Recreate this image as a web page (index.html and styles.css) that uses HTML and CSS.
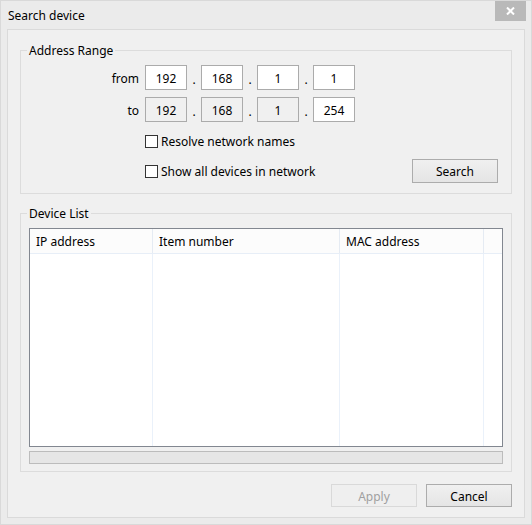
FILE: index.html
```html
<!DOCTYPE html>
<html>
<head>
<meta charset="utf-8">
<link rel="stylesheet" href="styles.css">
</head>
<body>
<div class="window">
  <div class="titlebar">
    <span class="title">Search device</span>
    <div class="close">
      <svg width="9" height="8" viewBox="0 0 9 8"><path d="M1 0.5 L8 7.5 M8 0.5 L1 7.5" stroke="#fff" stroke-width="2"/></svg>
    </div>
  </div>
  <div class="client">
    <div class="group group-range">
      <span class="legend">Address Range</span>
      <div class="ip-row">
        <span class="ip-label">from</span>
        <span class="octet">192</span><span class="dot">.</span>
        <span class="octet">168</span><span class="dot">.</span>
        <span class="octet">1</span><span class="dot">.</span>
        <span class="octet">1</span>
      </div>
      <div class="ip-row ip-row-to">
        <span class="ip-label">to</span>
        <span class="octet ro">192</span><span class="dot">.</span>
        <span class="octet ro">168</span><span class="dot">.</span>
        <span class="octet ro">1</span><span class="dot">.</span>
        <span class="octet">254</span>
      </div>
      <div class="check-row check-first">
        <span class="checkbox"></span><span class="check-label">Resolve network names</span>
      </div>
      <div class="check-row check-second">
        <span class="checkbox"></span><span class="check-label">Show all devices in network</span>
        <button class="btn btn-search">Search</button>
      </div>
    </div>
    <div class="group group-list">
      <span class="legend">Device List</span>
      <div class="listview">
        <div class="lv-header">
          <div class="col c1">IP address</div>
          <div class="col c2">Item number</div>
          <div class="col c3">MAC address</div>
          <div class="col c4"></div>
        </div>
        <div class="lv-body">
          <div class="col c1"></div>
          <div class="col c2"></div>
          <div class="col c3"></div>
          <div class="col c4"></div>
        </div>
      </div>
      <div class="progress"></div>
    </div>
    <div class="buttons">
      <button class="btn btn-disabled">Apply</button>
      <button class="btn">Cancel</button>
    </div>
  </div>
</div>
</body>
</html>
```

FILE: styles.css
```css
* { box-sizing: border-box; }
html, body { margin: 0; padding: 0; background: #ebebeb; }
body {
  font-family: "Noto Sans", "Open Sans", sans-serif;
  font-size: 12px;
  color: #000;
}
.window {
  width: 532px;
  height: 525px;
  border: 1px solid #d9d9d9;
  background: #ebebeb;
  padding: 0 6px 6px 6px;
  display: flex;
  flex-direction: column;
}
.titlebar {
  height: 28px;
  display: flex;
  align-items: flex-start;
  justify-content: space-between;
}
.title {
  margin-top: 7px;
  margin-left: 1px;
  line-height: 16px;
}
.close {
  width: 31px;
  height: 20px;
  margin-right: -1px;
  background: #b9b9b9;
  display: flex;
  align-items: center;
  justify-content: center;
}
.client {
  flex: 1;
  border: 1px solid #dadada;
  background: #f0f0f0;
  display: flex;
  flex-direction: column;
  padding: 20px 12px 0 12px;
}
.group {
  position: relative;
  border: 1px solid #dcdcdc;
}
.legend {
  position: absolute;
  top: -8px;
  left: 6px;
  padding: 0 2px;
  line-height: 16px;
  background: #f0f0f0;
}
.group-range {
  height: 144px;
  padding: 14px 13px 10px 0;
  display: flex;
  flex-direction: column;
}
.ip-row {
  height: 25px;
  display: flex;
  align-items: center;
}
.ip-row-to { margin-top: 7px; }
.ip-label {
  width: 118px;
  margin-right: 6px;
  text-align: right;
  padding-top: 1px;
}
.octet {
  width: 42px;
  height: 25px;
  padding-top: 1px;
  border: 1px solid #ababab;
  background: #fff;
  display: flex;
  align-items: center;
  justify-content: center;
}
.octet.ro { background: #f0f0f0; }
.dot {
  width: 14px;
  text-align: center;
  padding-top: 4px;
}
.check-row {
  display: flex;
  align-items: center;
  padding-left: 124px;
}
.check-first { height: 20px; margin-top: 9px; }
.check-second { height: 24px; margin-top: 8px; }
.checkbox {
  width: 13px;
  height: 13px;
  border: 1px solid #333;
  background: #fff;
  margin-right: 3px;
}
.check-label { padding-top: 1px; }
.btn {
  font-family: inherit;
  font-size: 12px;
  color: #000;
  width: 86px;
  height: 23px;
  border: 1px solid #acacac;
  background: linear-gradient(#f0f0f0, #e5e5e5);
  padding: 1px 0 0 0;
  border-radius: 0;
}
.btn-search { margin-left: auto; height: 24px; }
.group-list {
  margin-top: 19px;
  height: 259px;
  padding: 14px 8px 7px 8px;
  display: flex;
  flex-direction: column;
}
.listview {
  height: 219px;
  border: 1px solid #828790;
  background: #fff;
  display: flex;
  flex-direction: column;
}
.lv-header {
  height: 25px;
  display: flex;
  background: #fcfcfc;
  border-bottom: 1px solid #e7eef7;
}
.lv-body {
  flex: 1;
  display: flex;
}
.col {
  padding-left: 6px;
  padding-top: 2px;
  line-height: 22px;
  white-space: nowrap;
}
.c1 { width: 123px; }
.c2 { width: 187px; }
.c3 { width: 144px; }
.c4 { flex: 1; }
.lv-header .c1, .lv-header .c2, .lv-header .c3 { border-right: 1px solid #e5ebf3; }
.lv-body .c1, .lv-body .c2, .lv-body .c3 { border-right: 1px solid #eaf1fa; }
.progress {
  margin-top: 4px;
  height: 13px;
  border: 1px solid #bcbcbc;
  background: #e6e6e6;
}
.buttons {
  margin-top: 12px;
  display: flex;
  justify-content: flex-end;
  gap: 9px;
  padding-right: 0;
}
.btn-disabled {
  color: #a0a0a0;
  border-color: #d9d9d9;
  background: #efefef;
}
```
